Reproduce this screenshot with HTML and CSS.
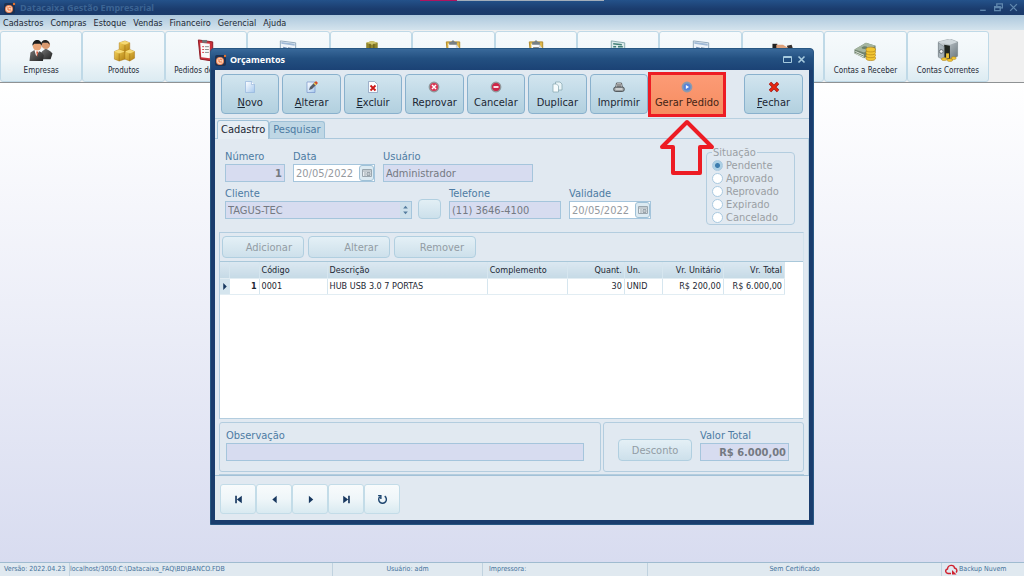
FILE: index.html
```html
<!DOCTYPE html>
<html lang="pt-BR">
<head>
<meta charset="utf-8">
<title>Datacaixa Gestão Empresarial</title>
<link rel="stylesheet" href="styles.css">
</head>
<body>
<svg class="defs" aria-hidden="true">
  <defs>
    <linearGradient id="gold" x1="0" x2="1" y2="1"><stop stop-color="#f5d35a"/><stop offset="1" stop-color="#b07e10"/></linearGradient>
    <linearGradient id="steel" x1="0" x2="1" y2="1"><stop stop-color="#dce2e5"/><stop offset="1" stop-color="#66737a"/></linearGradient>
    <linearGradient id="paper" x1="0" x2="1" y2="1"><stop stop-color="#fff"/><stop offset="1" stop-color="#a5c8ee"/></linearGradient>
    <linearGradient id="suit" x1="0" x2="1" y2="1"><stop stop-color="#777"/><stop offset="1" stop-color="#222"/></linearGradient>
    <symbol id="brand" viewBox="0 0 12 12"><rect y="1" width="11" height="11" rx="2" fill="#1c3152"/><circle cx="5" cy="7" r="4" fill="#f08a5a"/><circle cx="5" cy="7" r="3" fill="#fbd5bd"/><path d="M4 5v3h3M5 5l2 1" stroke="#e8703a" fill="none"/><circle cx="10" cy="2" r="1.2" fill="#e8732e"/></symbol>
    <symbol id="board" viewBox="0 0 24 24"><path d="M5 3h14v20H7z" fill="#e0b84a" stroke="#b08a2c"/><path d="M7 5h8l3 4v12H8z" fill="#f8f9fb"/><path d="M15 5v4h3" fill="#ccd3dc"/><path d="M8 3h2l2-2 2 2h2v3H8z" fill="#777f84"/></symbol>
    <symbol id="form" viewBox="0 0 24 24"><path d="M4 2l16 2v18L4 20z" fill="#edf3f8" stroke="#8fa7bb"/><path d="M5 3l14 2v2L5 5z" fill="#9fb9d6"/><path d="M7 8l4 1v3l-4-1z" fill="#738fb5"/><path d="M12 9l5 1M12 11l5 1M7 14l10 1M7 17l10 1" stroke="#8799ae"/></symbol>
    <symbol id="cal" viewBox="0 0 10 10"><path d="M.5 1.500h9v7h-9z" fill="#e9eef2" stroke="#9aa6ae"/><path d="M1 3h8M3 4v4M5 4.500h3v3h-3zM5 6h3" stroke="#89949c" fill="none" stroke-width=".8"/></symbol>
  </defs>
</svg>

<div class="app">
  <header class="titlebar">
    <svg class="brand"><use href="#brand"/></svg>
    <h1>Datacaixa Gestão Empresarial</h1>
    <div class="progress"><i></i></div>
    <div class="winctl">
      <button aria-label="Minimizar"><svg viewBox="0 0 8 8"><path d="M1 6.500h5" /></svg></button>
      <button aria-label="Restaurar"><svg viewBox="0 0 8 8"><path d="M2.500 3V.800h5v3.500H6M.500 3.300h5v3.500h-5zM.500 4h5"/></svg></button>
      <button aria-label="Sair"><svg viewBox="0 0 8 8"><path d="M1 1l6 6M7 1L1 7"/></svg></button>
    </div>
  </header>

  <nav class="menu">
    <button>Cadastros</button><button>Compras</button><button>Estoque</button><button>Vendas</button><button>Financeiro</button><button>Gerencial</button><button>Ajuda</button>
  </nav>

  <div class="launch">
    <button><svg viewBox="0 0 24 24"><path d="M12 21l1-8 4-3 5 3 2 2-2 6z" fill="url(#suit)"/><circle cx="17" cy="6" r="4.500" fill="#d99a70"/><path d="M12 6c0-7 9-6 9 0l-2-2-5 0z" fill="#222"/><path d="M0 23l1-9 5-3 7 3 2 3-1 6z" fill="url(#suit)"/><path d="M5 11l2 7 4-7z" fill="#fff"/><circle cx="8" cy="7.500" r="4.500" fill="#e9a578"/><path d="M3 7c0-8 10-8 10 0l-2-2-6 0z" fill="#1c1c1c"/><path d="M7 13l1 6 1-6z" fill="#d05030"/></svg><span>Empresas</span></button>
    <button><svg viewBox="0 0 24 24"><g fill="url(#gold)" stroke="#a87412" stroke-width=".5"><path d="M7 4l6-2 5 2v8l-5 2-6-2z"/><path d="M2 13l5-2 6 2v8l-6 2-5-2z"/><path d="M13 13l5-2 5 2v7l-5 3-5-2z"/></g><path d="M7 4l6 2 5-2-5-2zM2 13l5 2 6-2-6-2zM13 13l5 2 5-2-5-2z" fill="#f6da74"/><path d="M13 6v8M7 15v8M18 15v8" stroke="#9c6c10" stroke-width=".6"/></svg><span>Produtos</span></button>
    <button><svg viewBox="0 0 24 24"><path d="M4 1l15 2v20L6 21z" fill="#c9303a" stroke="#8d1822"/><path d="M6 4l10 1v15L7 19z" fill="#f9fafb"/><path d="M8 1l5 0v3H8z" fill="#6e7579"/><path d="M8 8l2 0M8 11h2M8 14h2" stroke="#d63e48"/><path d="M11 8h4M11 11h4M11 14h4" stroke="#888"/></svg><span>Pedidos de Venda</span></button>
    <button><svg><use href="#form"/></svg><span>Notas Fiscais</span></button>
    <button><svg viewBox="0 0 24 24"><path d="M1 13l6-3 5 2v9H1z" fill="#d79a38"/><path d="M7 4l6-2 6 2v15l-6 3-6-3z" fill="#91852b"/><path d="M7 4l6 2 6-2-6-2z" fill="#cfc46b"/><path d="M11 5v16M15 5v16" stroke="#5e561a"/></svg><span>Estoque</span></button>
    <button><svg><use href="#board"/></svg><span>Orçamentos</span></button>
    <button><svg viewBox="0 0 24 24"><use href="#board"/><path d="M9 9h6M9 12h7M9 15h7" stroke="#777"/></svg><span>Ordens</span></button>
    <button><svg viewBox="0 0 24 24"><path d="M5 2l14 2v18L5 20z" fill="#dceaea" stroke="#86a9ac"/><path d="M7 5l9 1M7 8h3M12 8h5M7 11h10M7 14h10" stroke="#438078" stroke-width="1.500"/></svg><span>Boletos</span></button>
    <button><svg><use href="#form"/></svg><span>Cupons</span></button>
    <button><svg viewBox="0 0 24 24"><path d="M1 5h5v8H1z" fill="#222"/><path d="M5 6l7 0 8 5-2 4-8-1-5-2z" fill="#dda17b"/><path d="M16 7l5-1 2 6-5 0z" fill="#38302d"/></svg><span>Contas a Pagar</span></button>
    <button><svg viewBox="0 0 24 24"><path d="M1 11l12-7 10 3v6l-12 7-10-5z" fill="#70836f"/><path d="M1 11l12-7 10 3-12 7z" fill="#a5b5a0"/><path d="M9 8l5 2M2 13l9 4M2 15l9 4" stroke="#e4eadf"/><ellipse cx="11.500" cy="9" rx="3" ry="1.500" fill="#6c806b"/><g fill="#f2c632" stroke="#a97b13" stroke-width=".6"><ellipse cx="18" cy="20" rx="5" ry="2.500"/><ellipse cx="18" cy="17" rx="5" ry="2.500"/><ellipse cx="18" cy="14" rx="5" ry="2.500"/><ellipse cx="18" cy="11" rx="5" ry="2.500"/></g></svg><span>Contas a Receber</span></button>
    <button><svg viewBox="0 0 24 24"><path d="M2 3l12-3 8 3v15l-8 4-12-4z" fill="url(#steel)" stroke="#667178" stroke-width=".5"/><path d="M2 3l12 3 8-3-8-3z" fill="#cfd7db"/><path d="M8 6l6 1v14l-6-2z" fill="#20251f"/><path d="M2 4l6 4v14l-6-3z" fill="#a8b3b9" stroke="#6d787f" stroke-width=".5"/><circle cx="5" cy="13" r="2" fill="#eef1f2" stroke="#606b70"/><path d="M10 15h3v5h-3z" fill="#edc135"/><g fill="#f2c632" stroke="#a97b13" stroke-width=".5"><ellipse cx="8" cy="21" rx="3" ry="1.500"/><ellipse cx="14" cy="22" rx="3" ry="1.500"/><ellipse cx="18" cy="20" rx="2.500" ry="1.500"/></g></svg><span>Contas Correntes</span></button>
  </div>

  <main class="desktop"></main>

  <footer class="status">
    <span class="s-version">Versão: 2022.04.23</span>
    <span class="s-db">localhost/3050:C:\Datacaixa_FAQ\BD\BANCO.FDB</span>
    <span class="s-user">Usuário: adm</span>
    <span class="s-printer">Impressora:</span>
    <span class="s-cert">Sem Certificado</span>
    <span class="s-cloud"><svg viewBox="0 0 13 11"><path d="M6 9.500H3C0 9 0 5.500 2.500 5 3 .300 9 .300 9.500 4c2.500.500 3 3 1.500 4.500" fill="none" stroke="#d0202e" stroke-width="1.400"/><path d="M7 6l4.500 4.500H7z" fill="#d0202e"/></svg>Backup Nuvem</span>
  </footer>
</div>

<section class="dialog" role="dialog" aria-labelledby="dlg-title">
  <header class="dialog-title">
    <svg class="brand"><use href="#brand"/></svg>
    <h2 id="dlg-title">Orçamentos</h2>
    <div class="dialog-ctl">
      <button aria-label="Maximizar"><svg viewBox="0 0 9 9"><path d="M.500 1.500h8v6h-8zM.500 2.500h8"/></svg></button>
      <button aria-label="Fechar janela"><svg viewBox="0 0 9 9"><path d="M1.500 1.500l6 6M7.500 1.500l-6 6" stroke-width="1.600"/></svg></button>
    </div>
  </header>

  <div class="dialog-body">
    <div class="actions">
      <div class="action-group">
        <button><svg viewBox="0 0 12 12"><path d="M1.500.500h6l3 3v8h-9z" fill="url(#paper)" stroke="#94b4dc" stroke-width=".7"/><path d="M7.500.500v3h3" fill="#fff" stroke="#8eafd8" stroke-width=".6"/></svg><span><u>N</u>ovo</span></button>
        <button><svg viewBox="0 0 12 12"><path d="M1 1h8v10.500H1z" fill="url(#paper)" stroke="#7794cc" stroke-width=".7"/><path d="M3 9l1-3 5-5 2 2-5 5z" fill="#555b66"/><path d="M8.500 1.500L10 0l2 2-1.500 1.500z" fill="#d74b27"/><path d="M7.500 2.500l1-1 2 2-1 1z" fill="#f1c64e"/></svg><span><u>A</u>lterar</span></button>
        <button><svg viewBox="0 0 12 12"><path d="M1.500.500h6l3 3v8h-9z" fill="#fcfdff" stroke="#8197b8" stroke-width=".7"/><path d="M3.500 4.500l5 5M8.500 4.500l-5 5" stroke="#cc1717" stroke-width="1.800"/></svg><span><u>E</u>xcluir</span></button>
        <button><svg viewBox="0 0 12 12"><circle cx="6" cy="6" r="4.700" fill="#da3553" stroke="#92979b" stroke-width="1.400"/><path d="M4 4l4 4M8 4L4 8" stroke="#fff" stroke-width="1.500"/></svg><span>Reprovar</span></button>
        <button><svg viewBox="0 0 12 12"><circle cx="6" cy="6" r="4.700" fill="#ce2447" stroke="#92979b" stroke-width="1.400"/><path d="M3.500 6h5" stroke="#fff" stroke-width="1.700"/></svg><span>Cancelar</span></button>
        <button><svg viewBox="0 0 12 12"><path d="M4.500 1h4.500l2 2v6H4.500z" fill="#eaf5f8" stroke="#82a4ad" stroke-width=".7"/><path d="M2 3h3.500l2 2v6H2z" fill="#f7fcfd" stroke="#82a4ad" stroke-width=".7"/></svg><span>Duplicar</span></button>
        <button><svg viewBox="0 0 12 12"><path d="M3.500 2h5l1 5h-7z" fill="#f6f7f8" stroke="#444" stroke-width=".8"/><path d="M5 3v3M7 3v3" stroke="#333"/><rect x=".7" y="6" width="10.600" height="4.500" rx="2" fill="#999fa1" stroke="#3e4346" stroke-width=".8"/><path d="M2.500 8h7" stroke="#fff"/></svg><span>Imprimir</span></button>
      </div>
      <button class="primary"><svg viewBox="0 0 12 12"><circle cx="6" cy="6" r="4.500" fill="#5482db" stroke="#8b9aae" stroke-width="1.800"/><path d="M4.900 4L8 6 4.900 8z" fill="#fff"/></svg><span>Gerar Pedido</span></button>
      <button class="close"><svg viewBox="0 0 12 12"><path d="M2 2l8 8M10 2l-8 8" stroke="#921111" stroke-width="3.200"/><path d="M2 2l8 8M10 2l-8 8" stroke="#e72811" stroke-width="2.200"/></svg><span><u>F</u>echar</span></button>
    </div>

    <div class="tabs" role="tablist">
      <button class="tab active" role="tab" aria-selected="true">Cadastro</button>
      <button class="tab" role="tab" aria-selected="false">Pesquisar</button>
    </div>

    <div class="page">
      <form class="record">
        <div class="rows">
          <div class="row">
            <div class="field f-num"><label for="numero">Número</label><input id="numero" class="num" value="1" disabled></div>
            <div class="field f-date"><label for="data">Data</label><div class="date"><input id="data" value="20/05/2022" disabled><button type="button" disabled aria-label="Calendário"><svg><use href="#cal"/></svg></button></div></div>
            <div class="field f-usr"><label for="usuario">Usuário</label><input id="usuario" value="Administrador" disabled></div>
          </div>
          <div class="row">
            <div class="field f-cli"><label for="cliente">Cliente</label><div class="combo"><select id="cliente" disabled><option>TAGUS-TEC</option></select><svg viewBox="0 0 11 17"><path d="M3 7L5.500 4 8 7zM3 10h5L5.500 13z" fill="#557c9e"/></svg></div></div>
            <button type="button" class="lookup" disabled aria-label="Buscar cliente"></button>
            <div class="field f-tel"><label for="telefone">Telefone</label><input id="telefone" value="(11) 3646-4100" disabled></div>
            <div class="field f-date"><label for="validade">Validade</label><div class="date"><input id="validade" value="20/05/2022" disabled><button type="button" disabled aria-label="Calendário"><svg><use href="#cal"/></svg></button></div></div>
          </div>
        </div>
        <fieldset class="situacao">
          <legend>Situação</legend>
          <label><input type="radio" name="sit" checked disabled>Pendente</label>
          <label><input type="radio" name="sit" disabled>Aprovado</label>
          <label><input type="radio" name="sit" disabled>Reprovado</label>
          <label><input type="radio" name="sit" disabled>Expirado</label>
          <label><input type="radio" name="sit" disabled>Cancelado</label>
        </fieldset>
      </form>

      <div class="items">
        <div class="item-actions">
          <button class="soft" disabled>Adicionar</button><button class="soft" disabled>Alterar</button><button class="soft" disabled>Remover</button>
        </div>
        <div class="grid">
          <table>
            <colgroup><col class="c-mark"><col class="c-seq"><col class="c-code"><col class="c-desc"><col class="c-comp"><col class="c-qty"><col class="c-un"><col class="c-price"><col class="c-price"></colgroup>
            <thead><tr><th></th><th></th><th>Código</th><th>Descrição</th><th>Complemento</th><th class="r">Quant.</th><th>Un.</th><th class="r">Vr. Unitário</th><th class="r">Vr. Total</th></tr></thead>
            <tbody><tr><td class="mark"><svg viewBox="0 0 4 8"><path d="M0 0l4 4-4 4z" fill="#17375f"/></svg></td><td class="r seq">1</td><td>0001</td><td>HUB USB 3.0 7 PORTAS</td><td></td><td class="r">30</td><td>UNID</td><td class="r">R$ 200,00</td><td class="r">R$ 6.000,00</td></tr></tbody>
          </table>
        </div>
      </div>

      <div class="totals">
        <div class="panel obs"><div class="field"><label for="obs">Observação</label><input id="obs" disabled></div></div>
        <div class="panel sum">
          <button class="soft center" disabled>Desconto</button>
          <div class="field"><label for="total">Valor Total</label><input id="total" class="num" value="R$ 6.000,00" disabled></div>
        </div>
      </div>
    </div>

    <div class="pager">
      <button aria-label="Primeiro"><svg viewBox="0 0 10 10"><path d="M2 1.500h1.500v7H2zM8 1.500v7L3.500 5z"/></svg></button>
      <button aria-label="Anterior"><svg viewBox="0 0 10 10"><path d="M7 1.500v7L3 5z"/></svg></button>
      <button aria-label="Próximo"><svg viewBox="0 0 10 10"><path d="M3.500 1.500v7l4-3.500z"/></svg></button>
      <button aria-label="Último"><svg viewBox="0 0 10 10"><path d="M6.500 1.500H8v7H6.500zM2 1.500v7L6.500 5z"/></svg></button>
      <button aria-label="Atualizar"><svg viewBox="0 0 10 10"><path d="M7 2a3.500 3.500 0 1 1-4.500.500M1 1.500h2.500v3" fill="none" stroke="#1e4670" stroke-width="1.300"/></svg></button>
    </div>
  </div>

  <svg class="arrow" viewBox="0 0 56 58" aria-hidden="true"><path d="M28 3L53 28H41V54H14V28H3Z" fill="none" stroke="#ed1c24" stroke-width="4" stroke-linejoin="round"/></svg>
</section>
</body>
</html>
```
FILE: styles.css
```css
* { box-sizing: border-box; }
body { margin: 0; font-family: "DejaVu Sans Condensed", "DejaVu Sans", sans-serif; font-size: 11px; color: #1c2733; overflow: hidden; }
button, input, select { font: inherit; color: inherit; margin: 0; padding: 0; border: 0; background: none; min-width: 0; }
h1, h2 { margin: 0; font-family: "Noto Sans", sans-serif; font-size: 9px; line-height: 12px; }
svg { display: block; flex: none; }
.defs { position: absolute; width: 0; height: 0; }
.brand { width: 12px; height: 12px; }

.app { display: flex; flex-direction: column; height: 100vh; }
.titlebar { position: relative; display: flex; align-items: center; gap: 4px; height: 15px; padding: 0 6px 0 4px; background: linear-gradient(#24528a, #1b3c6e 60%, #1a3a6a); color: #3b6494; }
.progress { position: absolute; top: 0; left: 41%; width: 18%; height: 1px; background: #a3aebb; }
.progress i { display: block; width: 20%; height: 1px; background: #b0145f; }
.winctl { display: flex; gap: 6px; margin-left: auto; }
.winctl svg { width: 9px; height: 9px; fill: none; stroke: #5f87ae; stroke-width: 1.2; }

.menu { display: flex; gap: 7px; height: 15px; padding: 0 3px; background: linear-gradient(#adc8dd, #d3e3ed); }
.menu button { font-size: 9px; line-height: 14px; }

.launch { display: flex; height: 53px; padding-top: 1px; background: #f0f0f0; border-bottom: 1px solid #8f9294; }
.launch button { flex: 0 0 auto; width: 8.05%; display: flex; flex-direction: column; align-items: center; gap: 4px; padding-top: 7px; font-size: 8px; line-height: 10px; white-space: nowrap; border: 1px solid #bfd9e7; border-radius: 3px; background: linear-gradient(#f6fafc, #f0f6f9 55%, #dcebf2); }
.launch svg { width: 24px; height: 23px; }

.desktop { flex: 1; background: linear-gradient(#fff, #d8dcf0); }

.status { display: flex; height: 14px; border-top: 1px solid #9fbbd0; background: #e0e9f0; color: #44719a; font-size: 7px; line-height: 12px; white-space: nowrap; }
.status span { padding-left: 4px; border-right: 1px solid #c0d2df; }
.status .s-version { width: 70px; }
.status .s-db { width: 263px; padding-left: 0; }
.status .s-user { width: 150px; padding-left: 0; text-align: center; }
.status .s-printer { width: 165px; padding-left: 6px; }
.status .s-cert { flex: 1; padding-left: 0; text-align: center; }
.status .s-cloud { display: flex; gap: 1px; width: 82px; padding-left: 3px; border: 0; }
.s-cloud svg { width: 13px; height: 11px; margin-top: 1px; }

.dialog { position: absolute; top: 48px; left: 210px; width: 604px; border: 1px solid #285783; border-radius: 4px 4px 0 0; padding: 0 4px 4px; background: #1a3d6e; }
.dialog-title { display: flex; align-items: center; gap: 3px; height: 21px; margin: 0 -4px; padding: 0 7px 0 4px; border-radius: 3px 3px 0 0; background: linear-gradient(#39699a, #235081 45%, #1b4275); color: #fff; }
.dialog-ctl { display: flex; gap: 5px; margin-left: auto; }
.dialog-ctl svg { width: 9px; height: 9px; fill: none; stroke: #a6cade; }

.dialog-body { background: #e1e9f1; }
.actions { display: flex; align-items: center; height: 49px; padding: 0 6px; border-bottom: 1px solid #b8d0e0; }
.action-group { flex: 1; display: grid; grid-template-columns: repeat(7, 1fr); gap: 3px; }
.actions button { display: flex; flex-direction: column; align-items: center; gap: 3px; height: 40px; padding-top: 6px; line-height: 14px; white-space: nowrap; border: 1px solid #89b1cd; border-radius: 4px; background: linear-gradient(#d2e5ef, #c1dae7 50%, #b2d0df); }
.actions svg { width: 12px; height: 12px; }
.actions .primary { width: 78px; height: 45px; border: 3px solid #ed1c24; border-radius: 0; background: linear-gradient(#fc9b76, #f68d60); color: #452414; }
.actions .close { width: 59px; margin-left: 18px; }

.tabs { display: flex; align-items: flex-end; height: 20px; padding-left: 2px; border-bottom: 1px solid #abc8dc; }
.tab { height: 17px; padding: 0 3px; border: 1px solid #9fc1d7; border-bottom: 0; border-radius: 3px 3px 0 0; background: #bfd7e5; color: #4d7ba3; line-height: 16px; }
.tab.active { height: 19px; margin-bottom: -1px; background: #e6eef4; color: #1c2733; }

.page { padding: 0 4px; border-right: 1px solid #b4cede; }
.record { display: flex; justify-content: space-between; height: 93px; padding: 11px 9px 0 6px; }
.rows { display: grid; grid-template-rows: 32px 32px; row-gap: 5px; }
.row { display: flex; align-items: flex-end; }
.field { display: flex; flex-direction: column; color: #4d7ba3; }
.field label { line-height: 14px; }
.field input, .combo select { width: 100%; height: 18px; padding: 0 2px; border: 1px solid #a5c5dc; border-radius: 0; background: #d7dcf0; color: #747982; opacity: 1; }
.field .num { text-align: right; font-weight: bold; }
.f-num { width: 60px; margin-right: 8px; }
.f-date { width: 82px; margin-right: 8px; }
.f-usr { width: 150px; }
.f-cli { width: 187px; margin-right: 6px; }
.f-tel { width: 112px; margin-right: 8px; }
.date { display: flex; border: 1px solid #a5c5dc; background: #fff; }
.date input { height: 16px; border: 0; background: #fff; color: #959a9f; }
.date button { flex: none; width: 15px; height: 16px; display: grid; place-items: center; border: 1px solid #9fc1d7; border-radius: 3px; background: #dceaf2; }
.date svg { width: 10px; height: 10px; }
.combo { position: relative; }
.combo select { display: block; appearance: none; }
.combo svg { position: absolute; right: 1px; top: 1px; width: 11px; height: 16px; background: #cde0eb; }
.lookup { width: 23px; height: 20px; margin-right: 8px; border: 1px solid #b1cfe0; border-radius: 4px; background: linear-gradient(#e2eff5, #cce0eb); }

.situacao { display: flex; flex-direction: column; width: 89px; height: 79px; margin: -4px 0 0; padding: 0 5px; border: 1px solid #b3cddf; border-radius: 4px; color: #9a9fa4; }
.situacao legend { padding: 0 1px; line-height: 13px; }
.situacao label { display: flex; align-items: center; gap: 3px; height: 13px; line-height: 13px; }
.situacao input { appearance: none; flex: none; width: 11px; height: 11px; border: 1px solid #a9c9e0; border-radius: 50%; background: #fff; }
.situacao input:checked { background: radial-gradient(circle, #3c7cae 0 2px, #acd0e5 3px); }

.items { border: 1px solid #b3cddf; border-bottom: 0; border-right-color: #d3e3ed; }
.item-actions { display: flex; gap: 4px; padding: 3px 2px; }
.soft { width: 82px; height: 22px; padding-right: 11px; text-align: right; color: #929ca4; border: 1px solid #b1cfe0; border-radius: 4px; background: linear-gradient(#e4f0f6, #cde0eb); }
.soft.center { width: 75px; padding: 0; text-align: center; }
.grid { height: 158px; border-top: 1px solid #a9c8da; border-bottom: 1px solid #b3cddf; background: #fff; }
table { table-layout: fixed; width: 565px; border-collapse: collapse; font-size: 9px; line-height: 14px; }
th { font-weight: normal; text-align: left; background: linear-gradient(#dbe8f1, #c6dae6); }
th, td { height: 16px; padding: 0 2px; border-right: 1px solid #d6e6ef; border-bottom: 1px solid #e2edf3; white-space: nowrap; }
.r { text-align: right; }
.seq { font-weight: bold; }
.mark { background: #d5e5ee; }
.mark svg { width: 4px; height: 7px; margin-left: 1px; }
.c-mark { width: 9px; } .c-seq { width: 30px; } .c-code { width: 68px; } .c-desc { width: 160px; } .c-comp { width: 80px; } .c-qty { width: 57px; } .c-un { width: 38px; } .c-price { width: 61px; }

.totals { display: flex; gap: 2px; padding: 3px 0 2px; border-bottom: 1px solid #b3cddf; }
.panel { height: 50px; padding: 6px; border: 1px solid #b3cddf; border-radius: 3px; }
.obs { flex: 1; padding-right: 16px; }
.sum { display: flex; align-items: flex-end; gap: 8px; width: 201px; padding: 6px 14px 10px; }
.sum .field { width: 90px; }

.pager { display: flex; height: 45px; padding: 8px 5px 6px; border-top: 1px solid #a2c1d7; }
.pager button { display: grid; place-items: center; width: 36px; height: 30px; border: 1px solid #c3dce8; border-radius: 3px; background: linear-gradient(#f8fbfc, #eff6f9 50%, #d9eaf1); }
.pager svg { width: 11px; height: 11px; fill: #17375f; }

.arrow { position: absolute; top: 70px; left: 448px; width: 56px; height: 58px; }
```
